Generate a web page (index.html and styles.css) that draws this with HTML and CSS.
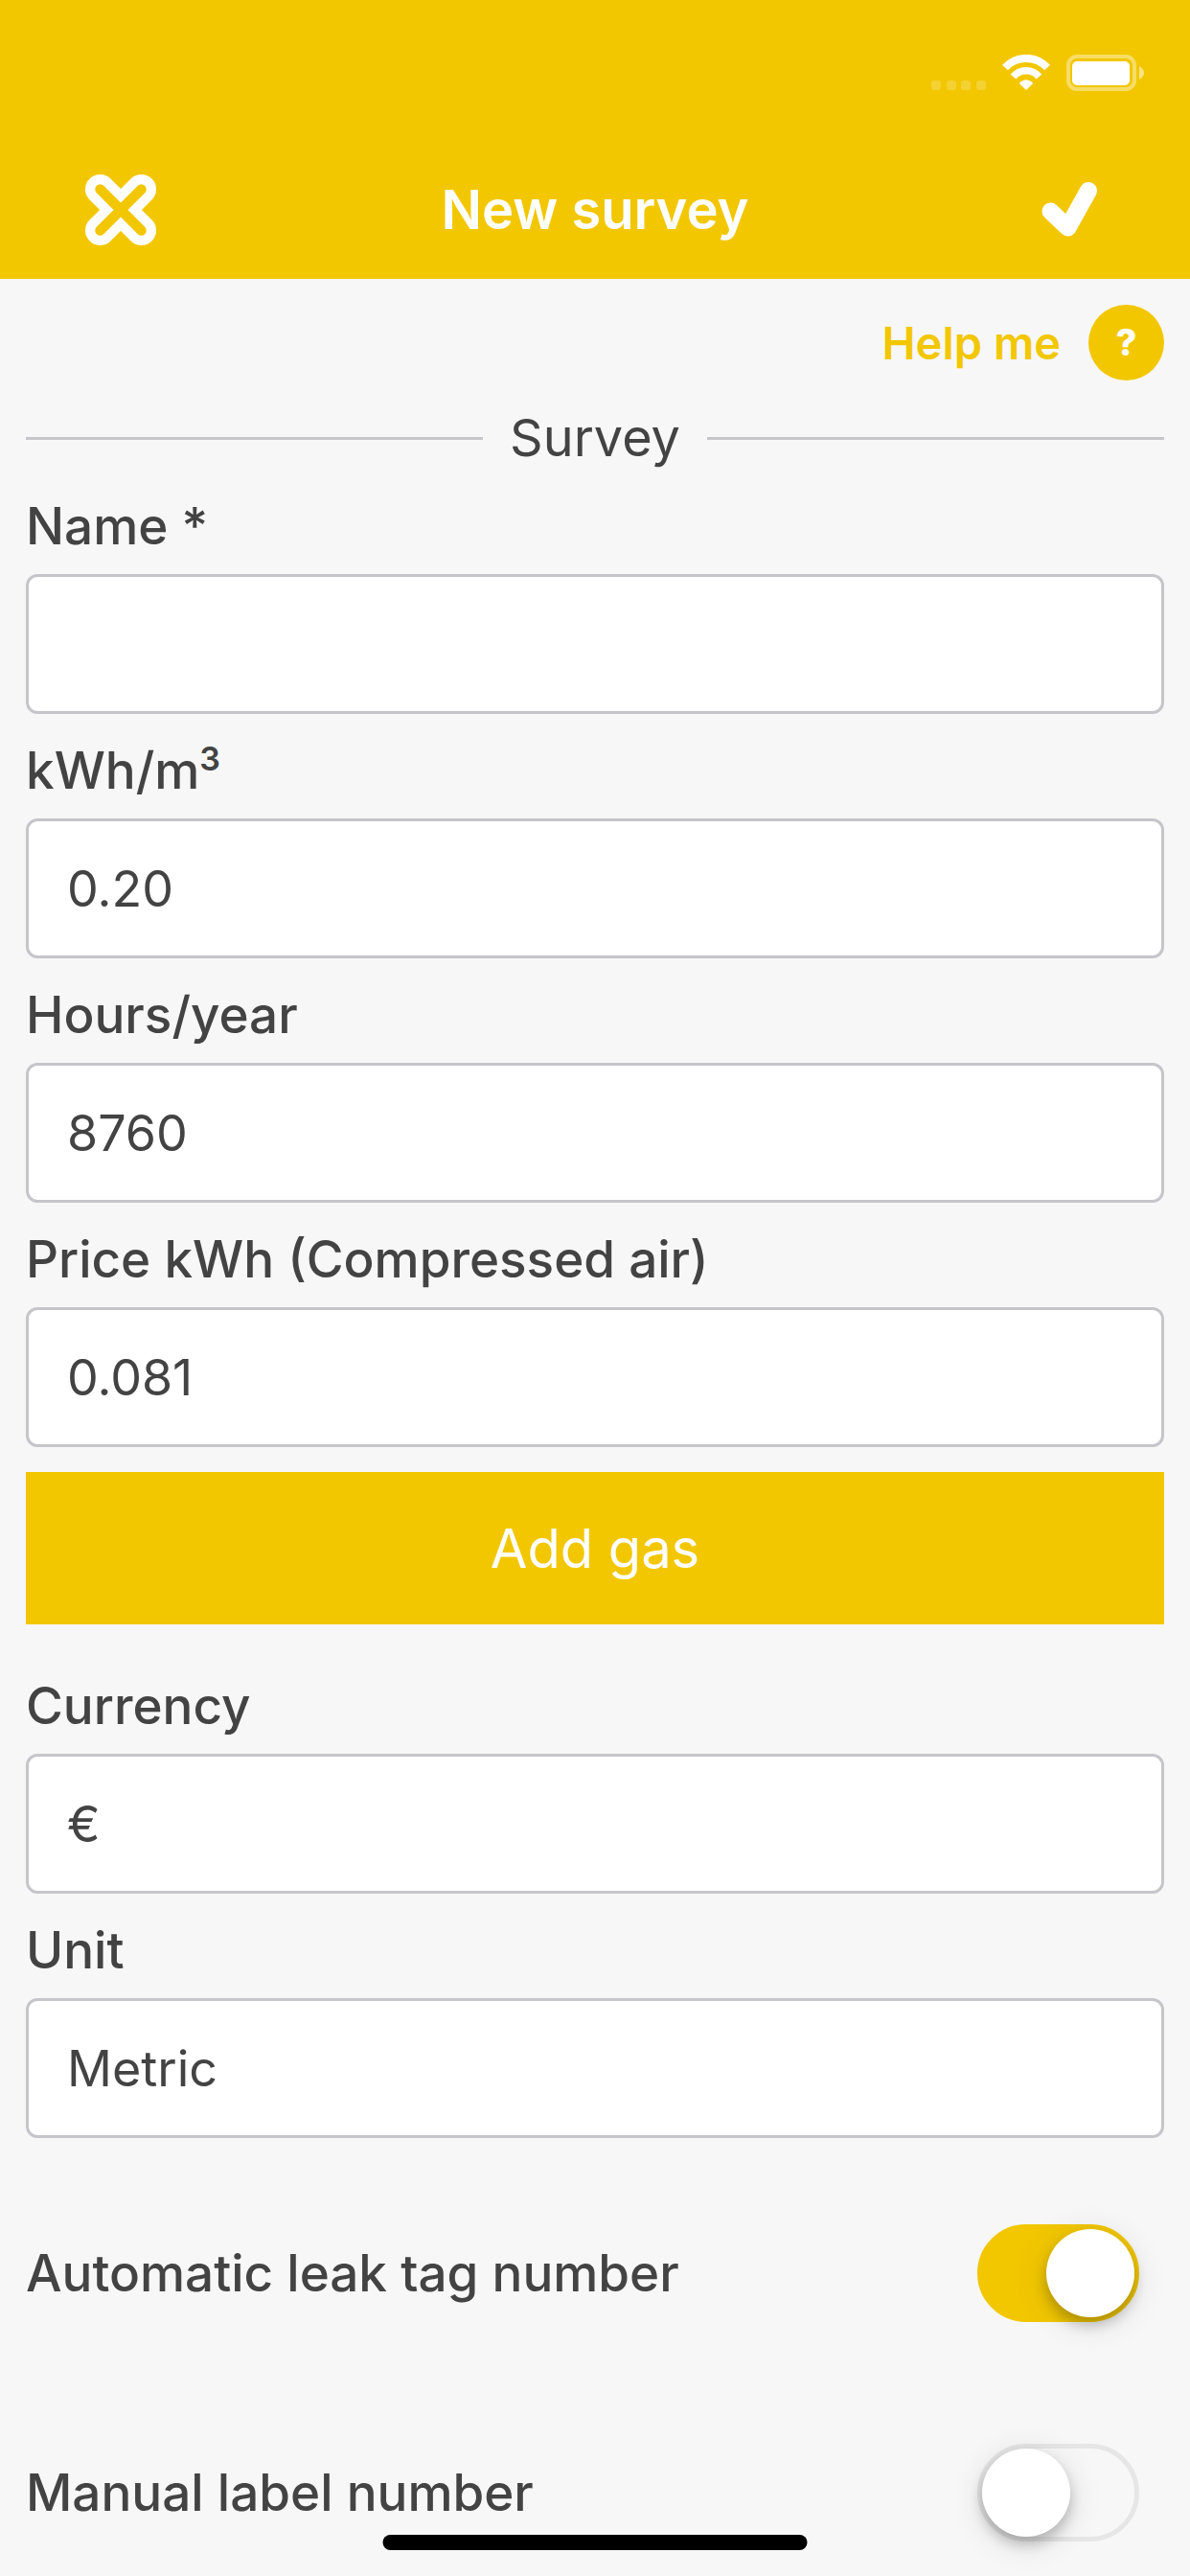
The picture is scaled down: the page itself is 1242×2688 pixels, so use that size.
FILE: index.html
```
<!DOCTYPE html>
<html lang="en">
<head>
    <meta charset="UTF-8">
    <meta name="viewport" content="width=device-width, initial-scale=1.0">
    <title>New survey</title>
    <link rel="stylesheet" href="styles.css">
</head>
<body>
    <header class="header">
        <div class="status-bar">
            <svg class="status-icons" viewBox="0 0 222 38" fill="#fff">
                <g opacity="0.2">
                    <rect x="0" y="27" width="10" height="10" rx="3"/>
                    <rect x="16" y="27" width="10" height="10" rx="3"/>
                    <rect x="31" y="27" width="10" height="10" rx="3"/>
                    <rect x="47" y="27" width="10" height="10" rx="3"/>
                </g>
                <g transform="translate(74 0)">
                    <path d="M3 13.5A30 30 0 0 1 47 13.5" fill="none" stroke="#fff" stroke-width="8"/>
                    <path d="M11.5 23A17.5 17.5 0 0 1 38.5 23" fill="none" stroke="#fff" stroke-width="7.5"/>
                    <path d="M17.8 30Q25 22.5 32.2 30L25 37Z"/>
                </g>
                <rect x="143" y="2" width="69" height="34" rx="9" fill="none" stroke="#fff" stroke-width="4" opacity="0.4"/>
                <rect x="147" y="7" width="60" height="25" rx="5"/>
                <path d="M217 12Q222 15 222 19T217 26Z" opacity="0.5"/>
            </svg>
        </div>
        <div class="navbar">
            <button class="icon-btn" type="button" aria-label="Cancel">
                <svg viewBox="0 0 74 74" fill="none" stroke-linecap="round">
                    <path d="M15.5 15.5L58.5 58.5M58.5 15.5L15.5 58.5" stroke="#fff" stroke-width="31"/>
                    <path d="M15.5 15.5L58.5 58.5M58.5 15.5L15.5 58.5" stroke="#f2c700" stroke-width="10.5"/>
                </svg>
            </button>
            <h1 class="title">New survey</h1>
            <button class="icon-btn" type="button" aria-label="Save">
                <svg viewBox="0 0 74 74" fill="none" stroke="#fff" stroke-width="18" stroke-linecap="round" stroke-linejoin="round">
                    <path d="M17.5 38.5L35.5 55.5L57 17"/>
                </svg>
            </button>
        </div>
    </header>

    <main class="content">
        <button class="help-btn" type="button">
            <span>Help me</span>
            <span class="help-icon">?</span>
        </button>

        <form>
            <h2 class="divider">Survey</h2>

            <div class="field">
                <label for="name">Name *</label>
                <input type="text" id="name">
            </div>
            <div class="field">
                <label for="kwh">kWh/m<sup>3</sup></label>
                <input type="text" id="kwh" value="0.20">
            </div>
            <div class="field">
                <label for="hours">Hours/year</label>
                <input type="text" id="hours" value="8760">
            </div>
            <div class="field">
                <label for="price">Price kWh (Compressed air)</label>
                <input type="text" id="price" value="0.081">
            </div>

            <button class="add-btn" type="button">Add gas</button>

            <div class="field">
                <label for="currency">Currency</label>
                <select id="currency">
                    <option>€</option>
                </select>
            </div>
            <div class="field">
                <label for="unit">Unit</label>
                <select id="unit">
                    <option>Metric</option>
                </select>
            </div>

            <div class="toggle-row">
                <label for="auto-tag">Automatic leak tag number</label>
                <input class="toggle" type="checkbox" id="auto-tag" checked>
            </div>
            <div class="toggle-row">
                <label for="manual-label">Manual label number</label>
                <input class="toggle" type="checkbox" id="manual-label">
            </div>
        </form>
    </main>

    <div class="home-indicator"></div>
</body>
</html>
```

FILE: styles.css
```
* {
    box-sizing: border-box;
}
body {
    margin: 0;
    height: 100vh;
    display: flex;
    flex-direction: column;
    background: #f7f7f7;
    color: #434343;
    font-family: Inter, "Liberation Sans", sans-serif;
    font-size: 52px;
}
button, input, select {
    font: inherit;
    color: inherit;
    margin: 0;
}
button {
    border: none;
    padding: 0;
    cursor: pointer;
}

/* Header */
.header {
    flex: none;
    background: #f2c700;
    color: white;
}
.status-bar {
    display: flex;
    justify-content: flex-end;
    height: 146px;
    padding: 57px 48px 0;
}
.status-icons {
    width: 222px;
    height: 38px;
}
.navbar {
    display: flex;
    align-items: center;
    justify-content: space-between;
    height: 145px;
    padding: 0 89px;
}
.title {
    margin: 0;
    font-size: 56px;
    font-weight: 600;
}
.icon-btn {
    width: 74px;
    height: 74px;
    background: none;
}
.icon-btn svg {
    display: block;
}

/* Form */
.content {
    flex: 1;
    min-height: 0;
    padding: 27px 27px 0;
    overflow-y: auto;
    scrollbar-width: none;
}
.help-btn {
    display: flex;
    align-items: center;
    gap: 29px;
    margin-left: auto;
    background: none;
    color: #f2c700;
    font-size: 47px;
    font-weight: 600;
}
.help-icon {
    width: 79px;
    height: 79px;
    border-radius: 50%;
    background: #f2c700;
    color: white;
    font-size: 38px;
    font-weight: 800;
    line-height: 79px;
}
.divider {
    display: flex;
    align-items: center;
    gap: 28px;
    margin: 26px 0 25px;
    font-size: 54px;
    font-weight: 400;
    line-height: 68px;
}
.divider::before,
.divider::after {
    content: "";
    flex: 1;
    height: 3px;
    background: #c6c5ca;
}
label {
    font-size: 53px;
    font-weight: 500;
    line-height: 66px;
}
.field {
    margin-bottom: 26px;
}
.field label {
    display: block;
    margin-bottom: 17px;
}
.field input,
.field select {
    display: block;
    width: 100%;
    height: 146px;
    padding: 0 40px;
    border: 3px solid #c6c5ca;
    border-radius: 12px;
    background: white;
    appearance: none;
    outline: none;
}
sup {
    font-size: 34px;
    font-weight: 600;
    line-height: 0;
}
.add-btn {
    display: block;
    width: 100%;
    height: 159px;
    margin-bottom: 52px;
    background: #f2c700;
    color: white;
    font-size: 56px;
}

/* Toggles */
.toggle-row {
    display: flex;
    align-items: center;
    justify-content: space-between;
    height: 229px;
    padding-right: 26px;
}
.toggle {
    width: 169px;
    height: 102px;
    margin: 0;
    border: 5px solid #e6e6e6;
    border-radius: 51px;
    appearance: none;
    cursor: pointer;
}
.toggle::before {
    content: "";
    display: block;
    width: 92px;
    height: 92px;
    border-radius: 50%;
    background: white;
    box-shadow: 0 8px 14px rgba(0, 0, 0, 0.22), 0 6px 36px rgba(0, 0, 0, 0.12);
}
.toggle:checked {
    border-color: #f2c700;
    background: #f2c700;
}
.toggle:checked::before {
    margin-left: auto;
}

.home-indicator {
    position: fixed;
    bottom: 27px;
    left: 50%;
    width: 443px;
    height: 16px;
    border-radius: 8px;
    background: black;
    transform: translateX(-50%);
}
```
